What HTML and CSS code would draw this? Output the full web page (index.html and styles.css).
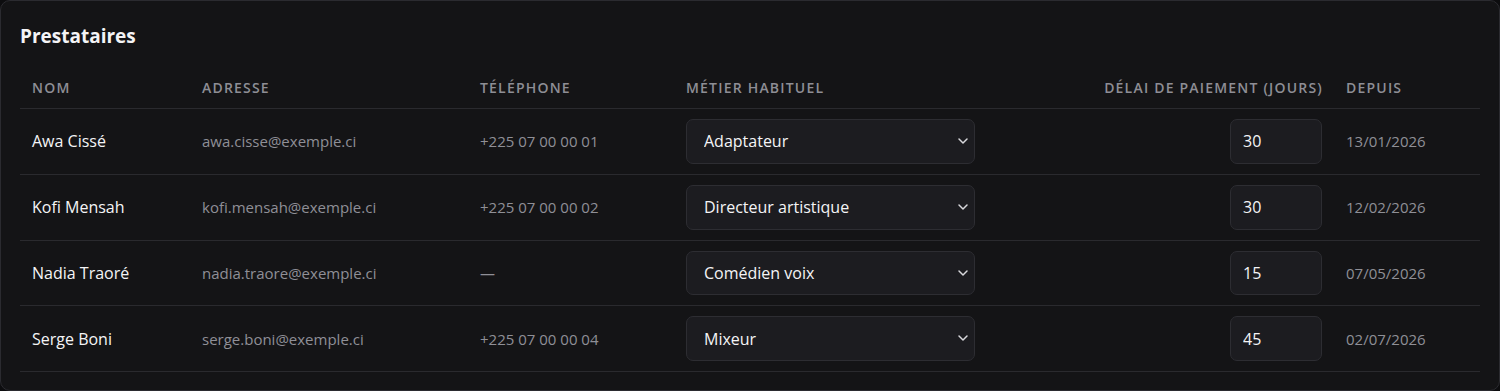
FILE: index.html
```html
<!DOCTYPE html>
<html>
<head>
    <title>Prestataires</title>
    <link rel="stylesheet" href="styles.css">
</head>
<body>
    <div class="card">
        <h2 class="card-title">Prestataires</h2>
        <table class="table">
            <colgroup>
                <col class="col-nom">
                <col class="col-adresse">
                <col class="col-tel">
                <col class="col-metier">
                <col class="col-delai">
                <col class="col-depuis">
            </colgroup>
            <thead>
                <tr>
                    <th>Nom</th>
                    <th>Adresse</th>
                    <th>Téléphone</th>
                    <th>Métier habituel</th>
                    <th class="num">Délai de paiement (jours)</th>
                    <th>Depuis</th>
                </tr>
            </thead>
            <tbody>
                <tr>
                    <td class="name">Awa Cissé</td>
                    <td class="muted">awa.cisse@exemple.ci</td>
                    <td class="muted">+225 07 00 00 01</td>
                    <td>
                        <div class="select-wrap">
                            <select class="select">
                                <option>Adaptateur</option>
                            </select>
                            <svg class="chevron" width="12" height="12" viewBox="0 0 12 12"><path d="M2 4l4 4 4-4" fill="none" stroke="currentColor" stroke-width="1.5" stroke-linecap="round" stroke-linejoin="round"/></svg>
                        </div>
                    </td>
                    <td class="num"><input class="input" type="text" value="30"></td>
                    <td class="muted">13/01/2026</td>
                </tr>
                <tr>
                    <td class="name">Kofi Mensah</td>
                    <td class="muted">kofi.mensah@exemple.ci</td>
                    <td class="muted">+225 07 00 00 02</td>
                    <td>
                        <div class="select-wrap">
                            <select class="select">
                                <option>Directeur artistique</option>
                            </select>
                            <svg class="chevron" width="12" height="12" viewBox="0 0 12 12"><path d="M2 4l4 4 4-4" fill="none" stroke="currentColor" stroke-width="1.5" stroke-linecap="round" stroke-linejoin="round"/></svg>
                        </div>
                    </td>
                    <td class="num"><input class="input" type="text" value="30"></td>
                    <td class="muted">12/02/2026</td>
                </tr>
                <tr>
                    <td class="name">Nadia Traoré</td>
                    <td class="muted">nadia.traore@exemple.ci</td>
                    <td class="muted">—</td>
                    <td>
                        <div class="select-wrap">
                            <select class="select">
                                <option>Comédien voix</option>
                            </select>
                            <svg class="chevron" width="12" height="12" viewBox="0 0 12 12"><path d="M2 4l4 4 4-4" fill="none" stroke="currentColor" stroke-width="1.5" stroke-linecap="round" stroke-linejoin="round"/></svg>
                        </div>
                    </td>
                    <td class="num"><input class="input" type="text" value="15"></td>
                    <td class="muted">07/05/2026</td>
                </tr>
                <tr>
                    <td class="name">Serge Boni</td>
                    <td class="muted">serge.boni@exemple.ci</td>
                    <td class="muted">+225 07 00 00 04</td>
                    <td>
                        <div class="select-wrap">
                            <select class="select">
                                <option>Mixeur</option>
                            </select>
                            <svg class="chevron" width="12" height="12" viewBox="0 0 12 12"><path d="M2 4l4 4 4-4" fill="none" stroke="currentColor" stroke-width="1.5" stroke-linecap="round" stroke-linejoin="round"/></svg>
                        </div>
                    </td>
                    <td class="num"><input class="input" type="text" value="45"></td>
                    <td class="muted">02/07/2026</td>
                </tr>
            </tbody>
        </table>
    </div>
</body>
</html>
```

FILE: styles.css
```css
* {
    box-sizing: border-box;
}

body {
    margin: 0;
    padding: 0;
    background-color: #0d0d0f;
    font-family: "Open Sans", "Noto Sans", sans-serif;
    color: #f2f2f4;
}

.card {
    height: 391px;
    background-color: #141416;
    border: 1px solid #2b2b30;
    border-radius: 10px;
    padding: 23px 19px 0 19px;
}

.card-title {
    margin: 0 0 16px 0;
    font-size: 19px;
    line-height: 24px;
    font-weight: 700;
    color: #f4f4f6;
}

.table {
    width: 100%;
    border-collapse: collapse;
    table-layout: fixed;
}

.col-nom { width: 170px; }
.col-adresse { width: 278px; }
.col-tel { width: 206px; }
.col-metier { width: 416px; }
.col-delai { width: 244px; }
.col-depuis { width: 146px; }

.table th {
    padding: 14px 12px 10px 12px;
    font-size: 14px;
    line-height: 20px;
    font-weight: 600;
    text-transform: uppercase;
    letter-spacing: 1.2px;
    color: #8e8e95;
    text-align: left;
    border-bottom: 1px solid #2a2a2e;
    white-space: nowrap;
}

.table th.num {
    padding-right: 11px;
}

.table td {
    padding: 10px 12px;
    font-size: 16px;
    line-height: 20px;
    border-bottom: 1px solid #2a2a2e;
    white-space: nowrap;
}

.table .num {
    text-align: right;
}

.name {
    color: #f4f4f6;
}

.table td.muted {
    font-size: 15px;
    color: #8f8f96;
}

.select-wrap {
    position: relative;
    width: 289px;
}

.select {
    appearance: none;
    -webkit-appearance: none;
    display: block;
    width: 100%;
    height: 44.75px;
    padding: 0 36px 0 17px;
    background-color: #1c1c20;
    border: 1px solid #2d2d32;
    border-radius: 7px;
    color: #f4f4f6;
    font-family: inherit;
    font-size: 16px;
    outline: none;
}

.chevron {
    position: absolute;
    right: 6px;
    top: 16px;
    color: #d8d8dc;
}

.input {
    display: inline-block;
    vertical-align: middle;
    width: 92px;
    height: 44.75px;
    padding: 0 12px;
    background-color: #1c1c20;
    border: 1px solid #2d2d32;
    border-radius: 7px;
    color: #f4f4f6;
    font-family: inherit;
    font-size: 16px;
    text-align: left;
    outline: none;
}
```
